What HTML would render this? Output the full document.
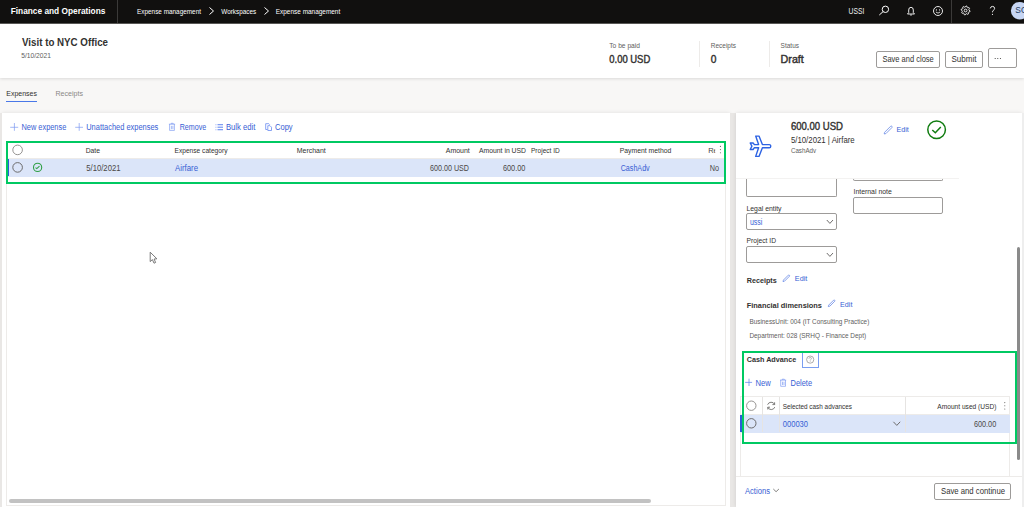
<!DOCTYPE html>
<html><head><meta charset="utf-8"><title>Expense</title>
<style>
html,body{margin:0;padding:0;width:1024px;height:507px;overflow:hidden;background:#f8f7f6}
body{position:relative;font-family:"Liberation Sans", sans-serif}
.r{position:absolute}
.ov{position:absolute;left:0;top:0}
</style></head><body>
<div class="r" style="left:0.00px;top:0.00px;width:1024.00px;height:507.00px;background:#f8f7f6"></div>
<div class="r" style="left:0.00px;top:0.00px;width:1024.00px;height:23.00px;background:#11100f"></div>
<div class="r" style="left:0.00px;top:23.00px;width:1024.00px;height:1.00px;background:#5a5957"></div>
<div class="r" style="left:0.00px;top:24.00px;width:1024.00px;height:54.00px;background:#fff;box-shadow:0 1px 3px rgba(0,0,0,0.12)"></div>
<div class="r" style="left:116.50px;top:0.00px;width:1.00px;height:23.00px;background:#3b3a39"></div>
<div class="r" style="left:699.00px;top:40.75px;width:1.00px;height:26.25px;background:#edebe9"></div>
<div class="r" style="left:769.00px;top:40.75px;width:1.00px;height:26.25px;background:#edebe9"></div>
<div class="r" style="left:876.20px;top:50.90px;width:63.80px;height:16.90px;border:1px solid #9d9b99;border-radius:2px;box-sizing:border-box;background:#fff"></div>
<div class="r" style="left:945.25px;top:50.90px;width:37.50px;height:16.90px;border:1px solid #9d9b99;border-radius:2px;box-sizing:border-box;background:#fff"></div>
<div class="r" style="left:988.20px;top:48.10px;width:28.60px;height:19.70px;border:1px solid #9d9b99;border-radius:2px;box-sizing:border-box;background:#fff"></div>
<div class="r" style="left:6.00px;top:100.80px;width:31.00px;height:1.20px;background:#4a78e8"></div>
<div class="r" style="left:2.00px;top:112.50px;width:728.00px;height:394.50px;background:#fff;box-shadow:0 0 4px rgba(0,0,0,0.10)"></div>
<div class="r" style="left:6.00px;top:142.00px;width:720.00px;height:363.50px;border:1px solid #edebe9;box-sizing:border-box"></div>
<div class="r" style="left:7.00px;top:158.00px;width:718.00px;height:1.00px;background:#edebe9"></div>
<div class="r" style="left:7.00px;top:158.50px;width:717.00px;height:18.10px;background:#dbe5f9"></div>
<div class="r" style="left:7.70px;top:158.60px;width:1.40px;height:17.80px;background:#2b5ed6"></div>
<div class="r" style="left:6.00px;top:140.80px;width:720.30px;height:43.50px;border:2px solid #00c962;box-sizing:border-box"></div>
<div class="r" style="left:9.00px;top:498.75px;width:642.20px;height:3.85px;background:#c2c2c2;border-radius:2px"></div>
<div class="r" style="left:730.00px;top:112.50px;width:5.60px;height:394.50px;background:#e9e7e5"></div>
<div class="r" style="left:0.00px;top:112.50px;width:2.00px;height:394.50px;background:#e9e7e5"></div>
<div class="r" style="left:735.60px;top:112.50px;width:286.40px;height:394.50px;background:#fff;box-shadow:0 0 4px rgba(0,0,0,0.10)"></div>
<div class="r" style="left:1022.00px;top:112.50px;width:2.00px;height:394.50px;background:#eeeeee"></div>
<div class="r" style="left:746.30px;top:178.00px;width:90.40px;height:19.20px;border:1px solid #9d9b99;border-top:none;border-radius:0 0 2px 2px;box-sizing:border-box"></div>
<div class="r" style="left:853.00px;top:178.00px;width:90.40px;height:2.60px;border:1px solid #9d9b99;border-top:none;border-radius:0 0 2px 2px;box-sizing:border-box"></div>
<div class="r" style="left:853.00px;top:197.10px;width:90.40px;height:16.50px;border:1px solid #9d9b99;border-radius:2px;box-sizing:border-box"></div>
<div class="r" style="left:746.30px;top:213.30px;width:90.40px;height:16.50px;border:1px solid #9d9b99;border-radius:2px;box-sizing:border-box"></div>
<div class="r" style="left:746.30px;top:246.10px;width:90.40px;height:16.50px;border:1px solid #9d9b99;border-radius:2px;box-sizing:border-box"></div>
<div class="r" style="left:735.60px;top:177.60px;width:223.90px;height:1.00px;background:#f3f2f1"></div>
<div class="r" style="left:802.20px;top:352.00px;width:16.80px;height:15.80px;border:1px solid #7a9ef0;box-sizing:border-box"></div>
<div class="r" style="left:740.40px;top:396.10px;width:269.60px;height:79.90px;border:1px solid #edebe9;border-bottom:none;box-sizing:border-box"></div>
<div class="r" style="left:740.40px;top:414.00px;width:269.60px;height:1.00px;background:#edebe9"></div>
<div class="r" style="left:741.00px;top:414.50px;width:268.50px;height:18.10px;background:#dbe5f9"></div>
<div class="r" style="left:740.00px;top:414.50px;width:2.00px;height:17.50px;background:#2b5ed6"></div>
<div class="r" style="left:762.00px;top:397.00px;width:1.00px;height:35.20px;background:#e6e4e2"></div>
<div class="r" style="left:779.00px;top:397.00px;width:1.00px;height:35.20px;background:#e6e4e2"></div>
<div class="r" style="left:905.30px;top:397.00px;width:1.00px;height:35.20px;background:#e6e4e2"></div>
<div class="r" style="left:741.50px;top:351.00px;width:275.70px;height:92.60px;border:2px solid #00c962;box-sizing:border-box"></div>
<div class="r" style="left:1017.00px;top:247.00px;width:3.30px;height:213.00px;background:#8a8a8a;border-radius:2px"></div>
<div class="r" style="left:735.60px;top:475.60px;width:286.40px;height:1.00px;background:#edebe9"></div>
<div class="r" style="left:934.10px;top:483.40px;width:77.20px;height:16.60px;border:1px solid #9d9b99;border-radius:2px;box-sizing:border-box;background:#fff"></div>
<svg class="ov" width="1024" height="507" viewBox="0 0 1024 507" font-family="Liberation Sans, sans-serif"><polyline points="209.5,7.5 213.5,11 209.5,14.5" fill="none" stroke="#fff" stroke-width="1"/><polyline points="264.5,7.5 268.5,11 264.5,14.5" fill="none" stroke="#fff" stroke-width="1"/><circle cx="885.4" cy="9.3" r="3.2" fill="none" stroke="#fff" stroke-width="1"/><line x1="883.1" y1="11.6" x2="879.3" y2="15" stroke="#fff" stroke-width="1"/><path d="M907.5,14 L908.7,12.6 L908.7,10 Q908.7,7.3 911,7.3 Q913.3,7.3 913.3,10 L913.3,12.6 L914.5,14 Z" fill="none" stroke="#fff" stroke-width="0.9"/><line x1="910.2" y1="15" x2="911.8" y2="15" stroke="#fff" stroke-width="0.9"/><circle cx="938" cy="11" r="4.5" fill="none" stroke="#fff" stroke-width="0.9"/><circle cx="936.4" cy="9.9" r="0.6" fill="#fff"/><circle cx="939.6" cy="9.9" r="0.6" fill="#fff"/><path d="M935.9,12 Q938,14.3 940.1,12" fill="none" stroke="#fff" stroke-width="0.8"/><circle cx="965.6" cy="10.5" r="1.4" fill="none" stroke="#fff" stroke-width="0.9"/><path d="M966.04,5.97 L966.91,6.14 L967.20,7.45 L967.76,7.82 L969.08,7.60 L969.57,8.33 L968.85,9.46 L968.98,10.12 L970.08,10.89 L969.91,11.76 L968.60,12.05 L968.23,12.61 L968.45,13.93 L967.72,14.42 L966.59,13.70 L965.93,13.83 L965.16,14.93 L964.29,14.76 L964.00,13.45 L963.44,13.08 L962.12,13.30 L961.63,12.57 L962.35,11.44 L962.22,10.78 L961.12,10.01 L961.29,9.14 L962.60,8.85 L962.97,8.29 L962.75,6.97 L963.48,6.48 L964.61,7.20 L965.27,7.07 Z" fill="none" stroke="#fff" stroke-width="0.85" stroke-linejoin="round"/><path d="M990.3,8.4 Q990.6,6.4 992.5,6.4 Q994.6,6.4 994.6,8.4 Q994.6,9.6 993.3,10.4 Q992.5,10.9 992.5,12.3" fill="none" stroke="#fff" stroke-width="0.9"/><circle cx="992.5" cy="14.3" r="0.6" fill="#fff"/><line x1="951.5" y1="0" x2="951.5" y2="23" stroke="#3b3a39" stroke-width="1"/><circle cx="1019.7" cy="10.7" r="8.8" fill="#c7d6f4"/><circle cx="995.2" cy="58.5" r="0.55" fill="#323130"/><circle cx="997.8" cy="58.5" r="0.55" fill="#323130"/><circle cx="1000.4" cy="58.5" r="0.55" fill="#323130"/><g stroke="#6a8cf0" stroke-width="0.8" fill="none"><g stroke="#7d9af0" stroke-width="0.7"><line x1="14.4" y1="123" x2="14.4" y2="130.8"/><line x1="10.2" y1="127.3" x2="18.2" y2="127.3"/><line x1="79.2" y1="123" x2="79.2" y2="130.8"/><line x1="75.2" y1="127.3" x2="83" y2="127.3"/></g><path d="M168.90,124.20 L175.10,124.20 M171.10,124.20 L171.10,123.30 L173.20,123.30 L173.20,124.20 M169.60,124.20 L169.60,130.40 L174.40,130.40 L174.40,124.20 M171.40,125.80 L171.40,129.10 M172.90,125.80 L172.90,129.10" stroke-width="0.6"/><line x1="217.5" y1="124.7" x2="223" y2="124.7" stroke-width="1.1"/><line x1="217.5" y1="127.2" x2="223" y2="127.2" stroke-width="1.1"/><line x1="217.5" y1="129.7" x2="223" y2="129.7" stroke-width="1.1"/><line x1="215.6" y1="124.7" x2="216.3" y2="124.7" stroke-width="1.1"/><line x1="215.6" y1="127.2" x2="216.3" y2="127.2" stroke-width="1.1"/><line x1="215.6" y1="129.7" x2="216.3" y2="129.7" stroke-width="1.1"/><path d="M267.5,129.5 L265.7,129.5 L265.7,123.7 L268.8,123.7 L269.8,124.7"/><path d="M267.8,125.7 L270,125.7 L271.5,127.2 L271.5,130.5 L267.8,130.5 Z"/></g><circle cx="17.6" cy="149.9" r="4.8" fill="#fff" stroke="#8a8886" stroke-width="0.9"/><circle cx="17.6" cy="167.4" r="4.8" fill="none" stroke="#605e5c" stroke-width="0.9"/><circle cx="37.6" cy="167.4" r="4.1" fill="none" stroke="#2e9f45" stroke-width="1.1"/><polyline points="35.5,167.6 36.8,168.6 39.5,166.2" fill="none" stroke="#2e9f45" stroke-width="1.1"/><svg x="708" y="140" width="7.2" height="16" overflow="hidden"><text x="0.2" y="13" font-family="Liberation Sans" font-size="7.5" fill="#484644">Rec</text></svg><circle cx="720.4" cy="146.4" r="0.55" fill="#605e5c"/><circle cx="720.4" cy="149.6" r="0.55" fill="#605e5c"/><circle cx="720.4" cy="152.8" r="0.55" fill="#605e5c"/><g fill="none" stroke="#605e5c" stroke-width="0.9"><polyline points="826.8,220 829.9,223.4 833,220"/><polyline points="826.8,253 829.9,256.4 833,253"/></g><path transform="translate(744,130)" d="M11.7,6.1 L15,6.1 L18.4,14.6 L25.2,14.6 A1.55,1.55 0 0 1 25.2,17.7 L18.4,17.7 L15,26.4 L11.7,26.4 L14.6,17.7 L10.4,17.7 L9.1,19.5 L6.2,19.5 L7.9,16.15 L6.2,13 L9.1,13 L10.4,14.6 L14.6,14.6 Z" fill="none" stroke="#2d63e3" stroke-width="1.4" stroke-linejoin="round"/><g transform="translate(880,120)"><path d="M4.6,12.3 L10.6,6.3 A0.9,0.9 0 0 1 11.9,7.6 L5.9,13.6 L4.2,14 Z" fill="none" stroke="#6a8ae6" stroke-width="0.8"/><circle cx="56.6" cy="9.7" r="8.8" fill="none" stroke="#107c10" stroke-width="1.5"/><polyline points="52.3,10 55.3,12.8 60.8,7" fill="none" stroke="#107c10" stroke-width="1.5"/></g><g transform="translate(776,270)"><path d="M7.4,10.1 L12.4,5.1 A0.8,0.8 0 0 1 13.5,6.2 L8.5,11.2 L7,11.6 Z" fill="none" stroke="#6a8ae6" stroke-width="0.8"/><path d="M52.7,35.1 L57.7,30.1 A0.8,0.8 0 0 1 58.8,31.2 L53.8,36.2 L52.3,36.6 Z" fill="none" stroke="#6a8ae6" stroke-width="0.8"/></g><g transform="translate(740,350)" fill="none" stroke="#6a8cf0" stroke-width="0.8"><circle cx="70.2" cy="9.6" r="3.6" stroke="#8a8886" stroke-width="0.7"/><path d="M68.9,8.6 Q69,7.5 70.2,7.5 Q71.4,7.5 71.4,8.5 Q71.4,9.3 70.6,9.7 Q70.2,10 70.2,10.6" stroke="#8a8886" stroke-width="0.6"/><circle cx="70.2" cy="11.7" r="0.35" fill="#8a8886" stroke="none"/><line x1="9" y1="28.7" x2="9" y2="36"/><line x1="5.1" y1="32.4" x2="12.1" y2="32.4"/><path d="M40.00,30.10 L46.20,30.10 M42.20,30.10 L42.20,29.20 L44.30,29.20 L44.30,30.10 M40.70,30.10 L40.70,36.30 L45.50,36.30 L45.50,30.10 M42.50,31.70 L42.50,35.00 M44.00,31.70 L44.00,35.00" stroke-width="0.6"/></g><g transform="translate(740,396)"><circle cx="11.3" cy="9.7" r="4.7" fill="none" stroke="#8a8886" stroke-width="0.9"/><circle cx="11.3" cy="27.3" r="4.7" fill="none" stroke="#605e5c" stroke-width="0.9"/><path d="M27.6,8.7 A3.8,3.8 0 0 1 34.6,8.4 M34.6,6.3 L34.6,8.6 L32.4,8.6 M34.8,11.1 A3.8,3.8 0 0 1 27.8,11.4 M27.8,13.5 L27.8,11.2 L30,11.2" fill="none" stroke="#605e5c" stroke-width="0.8"/><polyline points="153.4,25.8 156.8,29.4 160.2,25.8" fill="none" stroke="#605e5c" stroke-width="0.9"/><circle cx="264.8" cy="6.6" r="0.55" fill="#605e5c"/><circle cx="264.8" cy="9.8" r="0.55" fill="#605e5c"/><circle cx="264.8" cy="13" r="0.55" fill="#605e5c"/></g><polyline points="773.3,489 776.1,491.7 778.9,489" fill="none" stroke="#605e5c" stroke-width="0.8"/>
<text x="10.70" y="14" font-size="8.31" fill="#fff" font-weight="bold" textLength="94.70" lengthAdjust="spacingAndGlyphs">Finance and Operations</text>
<text x="137.00" y="14" font-size="7.16" fill="#fff" textLength="64.00" lengthAdjust="spacingAndGlyphs">Expense management</text>
<text x="221.25" y="14" font-size="7.16" fill="#fff" textLength="35.00" lengthAdjust="spacingAndGlyphs">Workspaces</text>
<text x="275.75" y="14" font-size="7.16" fill="#fff" textLength="64.50" lengthAdjust="spacingAndGlyphs">Expense management</text>
<text x="848.50" y="14" font-size="8.20" fill="#f0f0f0" textLength="15.80" lengthAdjust="spacingAndGlyphs">USSI</text>
<text x="1015.30" y="13" font-size="8.40" fill="#243a5e">SC</text>
<text x="22.00" y="46" font-size="10.20" fill="#323130" font-weight="bold" textLength="86.00" lengthAdjust="spacingAndGlyphs">Visit to NYC Office</text>
<text x="21.20" y="58" font-size="7.30" fill="#605e5c" textLength="29.70" lengthAdjust="spacingAndGlyphs">5/10/2021</text>
<text x="609.25" y="48" font-size="7.30" fill="#605e5c" textLength="30.75" lengthAdjust="spacingAndGlyphs">To be paid</text>
<text x="609.25" y="63" font-size="10.20" fill="#323130" stroke="#323130" stroke-width="0.4" textLength="41.00" lengthAdjust="spacingAndGlyphs">0.00 USD</text>
<text x="710.80" y="48" font-size="7.30" fill="#605e5c" textLength="25.20" lengthAdjust="spacingAndGlyphs">Receipts</text>
<text x="710.80" y="63" font-size="10.20" fill="#323130" stroke="#323130" stroke-width="0.4">0</text>
<text x="780.60" y="48" font-size="7.30" fill="#605e5c" textLength="18.40" lengthAdjust="spacingAndGlyphs">Status</text>
<text x="780.60" y="63" font-size="10.20" fill="#323130" stroke="#323130" stroke-width="0.4" textLength="23.20" lengthAdjust="spacingAndGlyphs">Draft</text>
<text x="882.40" y="62" font-size="8.55" fill="#323130" textLength="51.40" lengthAdjust="spacingAndGlyphs">Save and close</text>
<text x="951.50" y="62" font-size="8.55" fill="#323130" textLength="25.00" lengthAdjust="spacingAndGlyphs">Submit</text>
<text x="6.30" y="96" font-size="7.90" fill="#323130" textLength="30.70" lengthAdjust="spacingAndGlyphs">Expenses</text>
<text x="55.50" y="96" font-size="7.90" fill="#8a8886" textLength="27.50" lengthAdjust="spacingAndGlyphs">Receipts</text>
<text x="21.50" y="130" font-size="8.36" fill="#3760d4" textLength="44.80" lengthAdjust="spacingAndGlyphs">New expense</text>
<text x="86.25" y="130" font-size="8.36" fill="#3760d4" textLength="72.00" lengthAdjust="spacingAndGlyphs">Unattached expenses</text>
<text x="179.70" y="130" font-size="8.36" fill="#3760d4" textLength="26.50" lengthAdjust="spacingAndGlyphs">Remove</text>
<text x="226.00" y="130" font-size="8.36" fill="#3760d4" textLength="29.40" lengthAdjust="spacingAndGlyphs">Bulk edit</text>
<text x="275.00" y="130" font-size="8.36" fill="#3760d4" textLength="17.60" lengthAdjust="spacingAndGlyphs">Copy</text>
<text x="85.75" y="153" font-size="7.50" fill="#323130" textLength="14.25" lengthAdjust="spacingAndGlyphs">Date</text>
<text x="174.50" y="153" font-size="7.50" fill="#323130" textLength="53.00" lengthAdjust="spacingAndGlyphs">Expense category</text>
<text x="296.75" y="153" font-size="7.50" fill="#323130" textLength="29.00" lengthAdjust="spacingAndGlyphs">Merchant</text>
<text x="469.75" y="153" font-size="7.50" fill="#323130" text-anchor="end" textLength="24.00" lengthAdjust="spacingAndGlyphs">Amount</text>
<text x="479.00" y="153" font-size="7.50" fill="#323130" textLength="47.00" lengthAdjust="spacingAndGlyphs">Amount in USD</text>
<text x="531.00" y="153" font-size="7.50" fill="#323130" textLength="28.75" lengthAdjust="spacingAndGlyphs">Project ID</text>
<text x="619.75" y="153" font-size="7.50" fill="#323130" textLength="51.50" lengthAdjust="spacingAndGlyphs">Payment method</text>
<text x="86.25" y="171" font-size="8.30" fill="#4a4846" textLength="34.25" lengthAdjust="spacingAndGlyphs">5/10/2021</text>
<text x="175.00" y="171" font-size="8.30" fill="#3760d4" textLength="23.00" lengthAdjust="spacingAndGlyphs">Airfare</text>
<text x="469.00" y="171" font-size="8.30" fill="#4a4846" text-anchor="end" textLength="39.00" lengthAdjust="spacingAndGlyphs">600.00 USD</text>
<text x="525.40" y="171" font-size="8.30" fill="#4a4846" text-anchor="end" textLength="22.50" lengthAdjust="spacingAndGlyphs">600.00</text>
<text x="620.70" y="171" font-size="8.30" fill="#3760d4" textLength="29.00" lengthAdjust="spacingAndGlyphs">CashAdv</text>
<text x="709.75" y="171" font-size="8.30" fill="#4a4846" textLength="9.30" lengthAdjust="spacingAndGlyphs">No</text>
<text x="853.50" y="194" font-size="7.64" fill="#323130" textLength="38.30" lengthAdjust="spacingAndGlyphs">Internal note</text>
<text x="746.50" y="211" font-size="7.64" fill="#323130" textLength="35.00" lengthAdjust="spacingAndGlyphs">Legal entity</text>
<text x="749.90" y="225" font-size="8.80" fill="#3760d4" textLength="12.50" lengthAdjust="spacingAndGlyphs">ussi</text>
<text x="746.50" y="243" font-size="7.50" fill="#323130" textLength="29.50" lengthAdjust="spacingAndGlyphs">Project ID</text>
<text x="790.90" y="130" font-size="10.50" fill="#323130" stroke="#323130" stroke-width="0.4" textLength="52.10" lengthAdjust="spacingAndGlyphs">600.00 USD</text>
<text x="790.90" y="143" font-size="8.70" fill="#323130" textLength="63.80" lengthAdjust="spacingAndGlyphs">5/10/2021 | Airfare</text>
<text x="790.90" y="153" font-size="7.00" fill="#605e5c" textLength="25.30" lengthAdjust="spacingAndGlyphs">CashAdv</text>
<text x="896.60" y="132" font-size="8.00" fill="#3760d4" textLength="12.20" lengthAdjust="spacingAndGlyphs">Edit</text>
<text x="746.70" y="283" font-size="7.55" fill="#323130" font-weight="bold" textLength="30.00" lengthAdjust="spacingAndGlyphs">Receipts</text>
<text x="794.80" y="281" font-size="8.00" fill="#3760d4" textLength="12.50" lengthAdjust="spacingAndGlyphs">Edit</text>
<text x="746.70" y="308" font-size="7.55" fill="#323130" font-weight="bold" textLength="75.30" lengthAdjust="spacingAndGlyphs">Financial dimensions</text>
<text x="840.10" y="307" font-size="8.00" fill="#3760d4" textLength="12.30" lengthAdjust="spacingAndGlyphs">Edit</text>
<text x="749.40" y="324" font-size="7.20" fill="#605e5c" textLength="119.90" lengthAdjust="spacingAndGlyphs">BusinessUnit: 004 (IT Consulting Practice)</text>
<text x="749.40" y="338" font-size="7.20" fill="#605e5c" textLength="116.70" lengthAdjust="spacingAndGlyphs">Department: 028 (SRHQ - Finance Dept)</text>
<text x="746.80" y="362" font-size="7.55" fill="#323130" font-weight="bold" textLength="49.40" lengthAdjust="spacingAndGlyphs">Cash Advance</text>
<text x="755.50" y="386" font-size="8.36" fill="#3760d4" textLength="15.20" lengthAdjust="spacingAndGlyphs">New</text>
<text x="790.50" y="386" font-size="8.36" fill="#3760d4" textLength="21.60" lengthAdjust="spacingAndGlyphs">Delete</text>
<text x="782.80" y="409" font-size="7.50" fill="#323130" textLength="69.10" lengthAdjust="spacingAndGlyphs">Selected cash advances</text>
<text x="996.50" y="409" font-size="7.50" fill="#323130" text-anchor="end" textLength="59.20" lengthAdjust="spacingAndGlyphs">Amount used (USD)</text>
<text x="782.80" y="427" font-size="8.30" fill="#3760d4" textLength="25.20" lengthAdjust="spacingAndGlyphs">000030</text>
<text x="996.20" y="427" font-size="8.30" fill="#4a4846" text-anchor="end" textLength="22.30" lengthAdjust="spacingAndGlyphs">600.00</text>
<text x="744.90" y="494" font-size="8.40" fill="#3760d4" textLength="25.10" lengthAdjust="spacingAndGlyphs">Actions</text>
<text x="941.00" y="494" font-size="8.55" fill="#323130" textLength="64.00" lengthAdjust="spacingAndGlyphs">Save and continue</text><path transform="translate(145,248)" d="M5.2,4.2 L5.2,13.6 L7.4,11.6 L9,15.2 L10.6,14.5 L9.1,11 L11.9,10.8 Z" fill="#fff" stroke="#6b6b6b" stroke-width="0.9" stroke-linejoin="round"/></svg>
</body></html>
